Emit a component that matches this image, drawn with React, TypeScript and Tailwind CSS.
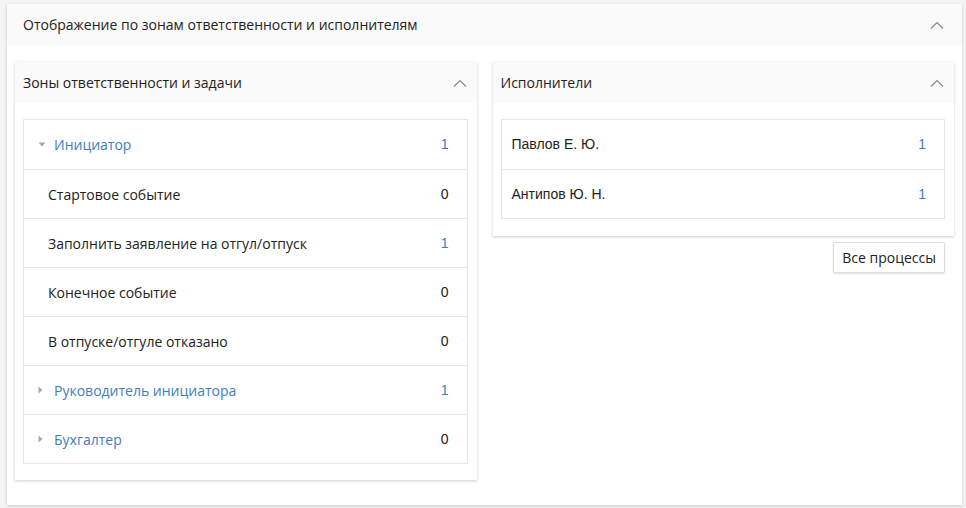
import React from 'react';

type Row = { label: string; count: number; kind: 'open' | 'closed' | 'child' };

const zones: Row[] = [
  { label: 'Инициатор', count: 1, kind: 'open' },
  { label: 'Стартовое событие', count: 0, kind: 'child' },
  { label: 'Заполнить заявление на отгул/отпуск', count: 1, kind: 'child' },
  { label: 'Конечное событие', count: 0, kind: 'child' },
  { label: 'В отпуске/отгуле отказано', count: 0, kind: 'child' },
  { label: 'Руководитель инициатора', count: 1, kind: 'closed' },
  { label: 'Бухгалтер', count: 0, kind: 'closed' },
];

const executors = [
  { name: 'Павлов Е. Ю.', count: 1 },
  { name: 'Антипов Ю. Н.', count: 1 },
];

function ChevronUp() {
  return (
    <svg width="14" height="8" viewBox="0 0 14 8" className="shrink-0">
      <path d="M1 7.5 L7 1.5 L13 7.5" fill="none" stroke="#8a8a8a" strokeWidth="1.2" />
    </svg>
  );
}

function Caret({ open }: { open: boolean }) {
  return open ? (
    <svg width="8" height="5" viewBox="0 0 8 5" className="shrink-0">
      <path d="M0.5 0.5 L7.5 0.5 L4 4.5 Z" fill="#a8a8a8" />
    </svg>
  ) : (
    <svg width="5" height="8" viewBox="0 0 5 8" className="shrink-0">
      <path d="M0.5 0.5 L4.5 4 L0.5 7.5 Z" fill="#a8a8a8" />
    </svg>
  );
}

function PanelHeader({ title }: { title: string }) {
  return (
    <div className="flex h-[41px] items-center justify-between bg-[#fafafa] pl-2 pr-[10px]">
      <span className="text-[14px] text-[#222]">{title}</span>
      <ChevronUp />
    </div>
  );
}

export default function App() {
  const openSans = { fontFamily: '"Open Sans", "Liberation Sans", sans-serif' };
  const arial = { fontFamily: '"Liberation Sans", Arial, sans-serif' };

  return (
    <div className="min-h-[508px] bg-[#f4f4f4] pl-[7px] pr-1 pt-1 pb-[3px]" style={openSans}>
      <div className="bg-white shadow-[0_1px_3px_rgba(0,0,0,0.18)]">
        {/* Main header */}
        <div className="flex h-[41px] items-center justify-between bg-[#fafafa] pl-4 pr-[18px]">
          <span className="text-[14px] text-[#222]">Отображение по зонам ответственности и исполнителям</span>
          <ChevronUp />
        </div>

        <div className="grid grid-cols-2 items-start gap-4 px-2 pt-[17px] pb-[25px]">
          {/* Zones */}
          <div className="bg-white shadow-[0_1px_3px_rgba(0,0,0,0.2)]">
            <PanelHeader title="Зоны ответственности и задачи" />
            <div className="pt-4 pb-4 pl-2 pr-[9px]">
              <div className="border border-[#e6e6e6]">
                {zones.map((z, i) => (
                  <div
                    key={z.label}
                    className={`flex h-[49px] items-center justify-between pr-[18px] ${i > 0 ? 'border-t border-[#e6e6e6]' : ''} ${
                      z.kind === 'child' ? 'pl-6' : 'pl-[14px]'
                    }`}
                  >
                    <div className="flex items-center">
                      {z.kind !== 'child' && (
                        <span className="flex w-4 items-center">
                          <Caret open={z.kind === 'open'} />
                        </span>
                      )}
                      <span className={`text-[14px] ${z.kind === 'child' ? 'text-[#222]' : 'text-[#3d7dc2]'}`}>
                        {z.label}
                      </span>
                    </div>
                    <span className={`text-[14px] ${z.count > 0 ? 'text-[#3d7dc2]' : 'text-[#222]'}`} style={arial}>
                      {z.count}
                    </span>
                  </div>
                ))}
              </div>
            </div>
          </div>

          {/* Executors */}
          <div className="flex flex-col">
            <div className="bg-white shadow-[0_1px_3px_rgba(0,0,0,0.2)]">
              <PanelHeader title="Исполнители" />
              <div className="pt-4 pb-[17px] pl-2 pr-[9px]">
                <div className="border border-[#e6e6e6]">
                  {executors.map((e, i) => (
                    <div
                      key={e.name}
                      className={`flex h-[49px] items-center justify-between pl-[10px] pr-[18px] ${i > 0 ? 'border-t border-[#e6e6e6]' : ''}`}
                      style={arial}
                    >
                      <span className="text-[14px] text-[#222]">{e.name}</span>
                      <span className="text-[14px] text-[#3d7dc2]">{e.count}</span>
                    </div>
                  ))}
                </div>
              </div>
            </div>
            <div className="mt-[6px] flex justify-end pr-[9px]">
              <button className="h-[31px] rounded-[2px] border border-[#ddd] bg-white px-2 text-[14px] text-[#222] shadow-[0_1px_2px_rgba(0,0,0,0.12)]">
                Все процессы
              </button>
            </div>
          </div>
        </div>
      </div>
    </div>
  );
}
